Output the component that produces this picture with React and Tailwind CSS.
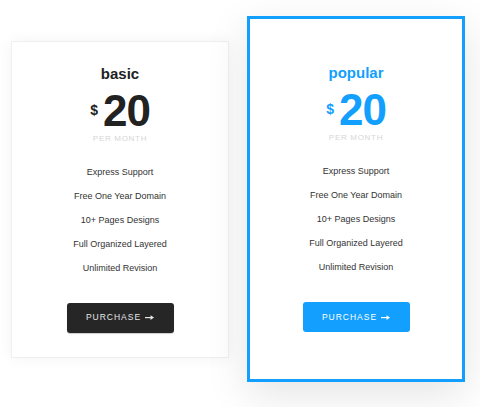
const features = [
  'Express Support',
  'Free One Year Domain',
  '10+ Pages Designs',
  'Full Organized Layered',
  'Unlimited Revision',
];

const plans = [
  { name: 'basic', price: '20', popular: false },
  { name: 'popular', price: '20', popular: true },
];

function Arrow() {
  return (
    <svg width="9" height="5" viewBox="0 0 9 5" className="ml-[4px]" aria-hidden="true">
      <rect x="0" y="2" width="6" height="1.2" fill="currentColor" />
      <path d="M5.5 0.2 L9 2.6 L5.5 5 Z" fill="currentColor" />
    </svg>
  );
}

function PlanCard({ plan }) {
  const { popular } = plan;
  return (
    <div
      className={
        popular
          ? 'w-[218px] bg-white border-[3px] border-[#129ffd] pt-[44px] pb-[47px] shadow-[0_12px_40px_rgba(0,0,0,0.11)] flex flex-col items-center'
          : 'w-[218px] bg-white border border-[#efefef] pt-[22px] pb-[24px] shadow-[0_0_14px_rgba(0,0,0,0.05)] flex flex-col items-center'
      }
    >
      <h3
        className={
          popular
            ? 'text-[15px] leading-[20px] font-bold text-[#129ffd]'
            : 'text-[15px] leading-[20px] font-bold text-[#222]'
        }
      >
        {plan.name}
      </h3>

      <div className={popular ? 'mt-[5px] flex items-start text-[#129ffd]' : 'mt-[5px] flex items-start text-[#222]'}>
        <span className="text-[14px] leading-[14px] font-bold mt-[14px] mr-[5px]">$</span>
        <span className="text-[44px] leading-[44px] font-bold tracking-[-1px]">{plan.price}</span>
      </div>

      <p className="text-[8px] leading-[12px] tracking-[0.7px] text-[#d6d6d6] uppercase">per month</p>

      <ul className="mt-[15px] flex flex-col items-center">
        {features.map((f) => (
          <li key={f} className="h-[24px] leading-[24px] text-[9px] text-[#333]">
            {f}
          </li>
        ))}
      </ul>

      <button
        className={
          popular
            ? 'mt-[23px] w-[107px] h-[30px] rounded-[3px] bg-[#129ffd] text-white text-[8.5px] tracking-[1px] uppercase flex items-center justify-center'
            : 'mt-[23px] w-[107px] h-[30px] rounded-[3px] bg-[#262626] text-[#e6e6e6] text-[8.5px] tracking-[1px] uppercase shadow-[0_1px_1px_rgba(0,0,0,0.2)] flex items-center justify-center'
        }
      >
        Purchase
        <Arrow />
      </button>
    </div>
  );
}

export default function App() {
  return (
    <div className="w-[480px] h-[407px] bg-white overflow-hidden font-['Liberation_Sans',Arial,sans-serif]">
      <div className="flex items-center gap-[18px] pl-[11px] pt-[16px]">
        {plans.map((plan) => (
          <PlanCard key={plan.name} plan={plan} />
        ))}
      </div>
    </div>
  );
}
